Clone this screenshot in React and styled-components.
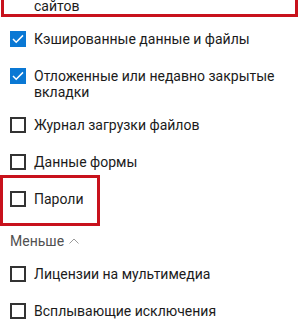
import React from 'react';
import styled, { createGlobalStyle } from 'styled-components';

const GlobalStyle = createGlobalStyle`
    html, body {
        margin: 0;
        padding: 0;
        background: #ffffff;
        overflow: hidden;
    }
    body {
        font-family: Roboto, "Liberation Sans", Arial, sans-serif;
    }
`

const Page = styled.div`
    width: 300px;
    height: 330px;
    overflow: hidden;
    background: #ffffff;
`

const List = styled.div`
    display: flex;
    flex-direction: column;
    gap: 17px;
    padding: 0 0 0 10px;
    margin-top: -18px;
`

const Row = styled.label`
    display: flex;
    align-items: flex-start;
    gap: 8px;
    min-height: 20px;
    font-size: 14px;
    line-height: 16px;
    color: #1b1b1b;
`

const Label = styled.span`
    max-width: 250px;
`

const Line = styled.span`
    display: block;
    white-space: nowrap;
`

const Box = styled.span`
    flex: none;
    box-sizing: border-box;
    width: 16px;
    height: 16px;
    display: flex;
    align-items: center;
    justify-content: center;
    border: ${p => (p.$checked ? 'none' : '2px solid #333333')};
    background: ${p => (p.$checked ? '#0a78d4' : '#ffffff')};
`

const Highlight = styled.div`
    box-sizing: border-box;
    width: ${p => p.$width}px;
    border: 3px solid #c8121c;
    margin: ${p => p.$margin};
    padding: ${p => p.$padding};
`

const Toggle = styled.div`
    display: flex;
    align-items: center;
    gap: 5px;
    margin-top: 5px;
    font-size: 14px;
    line-height: 16px;
    color: #505050;
`

const Checkbox = ({ checked, children }) => (
    <Row>
        <Box $checked={checked}>
            {checked && (
                <svg width="12" height="10" viewBox="0 0 12 10">
                    <polyline points="1,5 4.2,8.2 11,1.4" fill="none" stroke="#ffffff" strokeWidth="1.5" />
                </svg>
            )}
        </Box>
        <Label>{children}</Label>
    </Row>
)

const App = () => {
    return (
        <Page>
            <GlobalStyle />
            <List>
                <Highlight $width={297} $margin="-20px 0 -3px -9px" $padding="17px 6px 0 6px">
                    <Checkbox checked>
                        <Line>Файлы cookie и данные веб-</Line>
                        <Line>сайтов</Line>
                    </Checkbox>
                </Highlight>
                <Checkbox checked>Кэшированные данные и файлы</Checkbox>
                <Checkbox checked>Отложенные или недавно закрытые вкладки</Checkbox>
                <Checkbox>Журнал загрузки файлов</Checkbox>
                <Checkbox>Данные формы</Checkbox>
                <Highlight $width={100} $margin="-16px 0 -15px -10px" $padding="13px 7px 12px 7px">
                    <Checkbox>Пароли</Checkbox>
                </Highlight>
                <Toggle>
                    Меньше
                    <svg width="10" height="6" viewBox="0 0 10 6">
                        <polyline points="0.5,5.5 5,1 9.5,5.5" fill="none" stroke="#9a9a9a" strokeWidth="1" />
                    </svg>
                </Toggle>
                <Checkbox>Лицензии на мультимедиа</Checkbox>
                <Checkbox>Всплывающие исключения</Checkbox>
            </List>
        </Page>
    );
}

export default App;
